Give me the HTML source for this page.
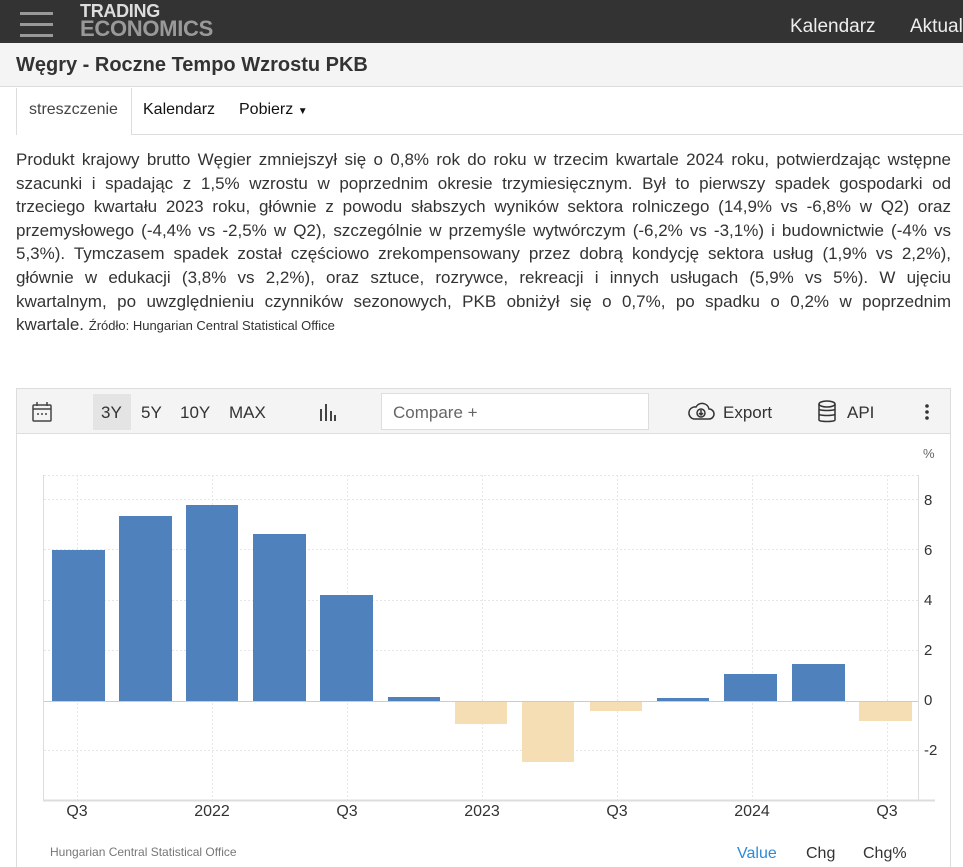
<!DOCTYPE html>
<html><head><meta charset="utf-8"><style>
*{margin:0;padding:0;box-sizing:border-box}
body{width:963px;height:867px;overflow:hidden;background:#fff;font-family:"Liberation Sans",sans-serif;color:#333;position:relative}
.top{position:absolute;left:0;top:0;width:963px;height:43px;background:#333}
.hb{position:absolute;left:20px;width:33px;height:3px;background:#999}
.logo{position:absolute;left:80px;top:4px;font-weight:bold;font-size:18px;line-height:15px;color:#ddd;letter-spacing:-0.3px}
.logo span{color:#999;font-size:22px;display:block;line-height:20px}
.nav{position:absolute;top:16px;color:#eee;font-size:19px}
.titlebar{position:absolute;top:43px;left:0;width:963px;height:44px;background:#f4f4f4;border-bottom:1px solid #ddd}
.titlebar h1{position:absolute;left:16px;top:11px;font-size:20px;font-weight:bold;color:#333}
.tab{position:absolute;top:88px;height:47px;font-size:16px;line-height:44px}
.para{position:absolute;left:16px;top:148px;width:935px;font-size:17px;line-height:23.6px;color:#333}
.para div{text-align:justify;text-align-last:justify;white-space:nowrap}
.para div.l{text-align-last:left}
.para small{font-size:13px}
.chartbox{position:absolute;left:16px;top:388px;width:935px;height:479px;border:1px solid #ddd;border-bottom:none}
.tb{position:absolute;left:0;top:0;width:933px;height:45px;background:#f4f4f4;border-bottom:1px solid #ddd;font-size:17px;color:#333}
.tb span{position:absolute;top:14px}
</style></head><body>
<div class="top">
<div class="hb" style="top:12px"></div><div class="hb" style="top:23px"></div><div class="hb" style="top:34px"></div>
<div class="logo">TRADING<span>ECONOMICS</span></div>
<div class="nav" style="left:790px">Kalendarz</div><div class="nav" style="left:910px">Aktual</div>
</div>
<div class="titlebar"><h1>Węgry - Roczne Tempo Wzrostu PKB</h1></div>
<div class="tab" style="left:16px;width:116px;border:1px solid #ddd;border-top:none;border-bottom:none;padding-left:12px;color:#444">streszczenie</div>
<div class="tab" style="left:143px;color:#111">Kalendarz</div>
<div class="tab" style="left:239px;color:#111">Pobierz <span style="font-size:10px">▼</span></div>
<div style="position:absolute;left:132px;top:134px;width:831px;height:1px;background:#ddd"></div>
<div class="para">
<div>Produkt krajowy brutto Węgier zmniejszył się o 0,8% rok do roku w trzecim kwartale 2024 roku, potwierdzając wstępne</div>
<div>szacunki i spadając z 1,5% wzrostu w poprzednim okresie trzymiesięcznym. Był to pierwszy spadek gospodarki od</div>
<div>trzeciego kwartału 2023 roku, głównie z powodu słabszych wyników sektora rolniczego (14,9% vs -6,8% w Q2) oraz</div>
<div>przemysłowego (-4,4% vs -2,5% w Q2), szczególnie w przemyśle wytwórczym (-6,2% vs -3,1%) i budownictwie (-4% vs</div>
<div>5,3%). Tymczasem spadek został częściowo zrekompensowany przez dobrą kondycję sektora usług (1,9% vs 2,2%),</div>
<div>głównie w edukacji (3,8% vs 2,2%), oraz sztuce, rozrywce, rekreacji i innych usługach (5,9% vs 5%). W ujęciu</div>
<div>kwartalnym, po uwzględnieniu czynników sezonowych, PKB obniżył się o 0,7%, po spadku o 0,2% w poprzednim</div>
<div class="l">kwartale. <small>Źródło: Hungarian Central Statistical Office</small></div>
</div>
<div class="chartbox">
<div class="tb">
<svg style="position:absolute;left:14px;top:12px" width="22" height="22" viewBox="0 0 22 22" fill="none" stroke="#444" stroke-width="1.5"><rect x="2" y="4" width="18" height="16" rx="1"/><line x1="2" y1="8" x2="20" y2="8"/><line x1="6" y1="1" x2="6" y2="5"/><line x1="16" y1="1" x2="16" y2="5"/><line x1="6" y1="13" x2="8" y2="13"/><line x1="10" y1="13" x2="12" y2="13"/><line x1="14" y1="13" x2="16" y2="13"/></svg>
<div style="position:absolute;left:76px;top:5px;width:38px;height:36px;background:#e4e4e4"></div>
<span style="left:84px">3Y</span><span style="left:124px">5Y</span><span style="left:163px">10Y</span><span style="left:212px">MAX</span>
<svg style="position:absolute;left:302px;top:14px" width="18" height="18"><rect x="1" y="6" width="2" height="12" fill="#444"/><rect x="6" y="1" width="2" height="17" fill="#444"/><rect x="11" y="8" width="2" height="10" fill="#444"/><rect x="15" y="12" width="2" height="6" fill="#444"/></svg>
<div style="position:absolute;left:364px;top:4px;width:268px;height:37px;background:#fff;border:1px solid #ddd"></div>
<span style="left:376px;color:#666">Compare +</span>
<svg style="position:absolute;left:670px;top:12px" width="28" height="22" viewBox="0 0 28 22" fill="none" stroke="#333" stroke-width="1.5"><path d="M7 18 H22 a5 5 0 0 0 0-10 a7 7 0 0 0-13-2 a6 6 0 0 0-2 12z"/><circle cx="14" cy="12" r="4"/><path d="M14 9v5M12 12l2 2 2-2"/></svg>
<span style="left:706px">Export</span>
<svg style="position:absolute;left:800px;top:11px" width="20" height="24" viewBox="0 0 20 24" fill="none" stroke="#333" stroke-width="1.5"><ellipse cx="10" cy="4" rx="8" ry="3"/><path d="M2 4v16c0 2 16 2 16 0V4M2 9c0 2 16 2 16 0M2 14c0 2 16 2 16 0"/></svg>
<span style="left:830px">API</span>
<svg style="position:absolute;left:907px;top:14px" width="6" height="18"><circle cx="3" cy="3" r="1.8" fill="#333"/><circle cx="3" cy="9" r="1.8" fill="#333"/><circle cx="3" cy="15" r="1.8" fill="#333"/></svg>
</div>
</div>
<svg style="position:absolute;left:0;top:0" width="963" height="867" font-family="Liberation Sans, sans-serif">
<g stroke="#e6e6e6" stroke-width="1" stroke-dasharray="2,2">
<line x1="44" y1="475.5" x2="918" y2="475.5"/>
<line x1="44" y1="499.5" x2="918" y2="499.5"/><line x1="44" y1="549.5" x2="918" y2="549.5"/><line x1="44" y1="600.5" x2="918" y2="600.5"/><line x1="44" y1="650.5" x2="918" y2="650.5"/><line x1="44" y1="750.5" x2="918" y2="750.5"/>
<line x1="77.5" y1="475" x2="77.5" y2="800"/><line x1="212.5" y1="475" x2="212.5" y2="800"/><line x1="347.5" y1="475" x2="347.5" y2="800"/><line x1="482.5" y1="475" x2="482.5" y2="800"/><line x1="617.5" y1="475" x2="617.5" y2="800"/><line x1="752.5" y1="475" x2="752.5" y2="800"/><line x1="887.5" y1="475" x2="887.5" y2="800"/>
</g>
<line x1="43.5" y1="475" x2="43.5" y2="800" stroke="#ddd"/>
<line x1="918.5" y1="475" x2="918.5" y2="800" stroke="#ddd"/>
<line x1="43" y1="800.5" x2="935" y2="800.5" stroke="#ddd" stroke-width="2"/>
<line x1="44" y1="701.5" x2="918" y2="701.5" stroke="#ccc"/>
<g fill="#4f81bd">
<rect x="52" y="550" width="53" height="151"/><rect x="119" y="516" width="53" height="185"/><rect x="186" y="505" width="52" height="196"/><rect x="253" y="534" width="53" height="167"/><rect x="320" y="595" width="53" height="106"/><rect x="388" y="697" width="52" height="4"/><rect x="657" y="698" width="52" height="3"/><rect x="724" y="674" width="53" height="27"/><rect x="792" y="664" width="53" height="37"/>
</g>
<g fill="#f5deb3">
<rect x="455" y="702" width="52" height="22"/><rect x="522" y="702" width="52" height="60"/><rect x="590" y="702" width="52" height="9"/><rect x="859" y="702" width="53" height="19"/>
</g>
<g font-size="15" fill="#333">
<text x="923" y="458" font-size="13" fill="#666">%</text>
<text x="924" y="505">8</text><text x="924" y="555">6</text><text x="924" y="605">4</text><text x="924" y="655">2</text><text x="924" y="705">0</text><text x="924" y="755">-2</text>
<g text-anchor="middle" font-size="16"><text x="77" y="816">Q3</text><text x="212" y="816">2022</text><text x="347" y="816">Q3</text><text x="482" y="816">2023</text><text x="617" y="816">Q3</text><text x="752" y="816">2024</text><text x="887" y="816">Q3</text></g>
<text x="50" y="856" font-size="12" fill="#777">Hungarian Central Statistical Office</text>
<text x="737" y="858" font-size="16" fill="#2b8bd8">Value</text><text x="806" y="858" font-size="16">Chg</text><text x="863" y="858" font-size="16">Chg%</text>
</g>
</svg>
</body></html>
